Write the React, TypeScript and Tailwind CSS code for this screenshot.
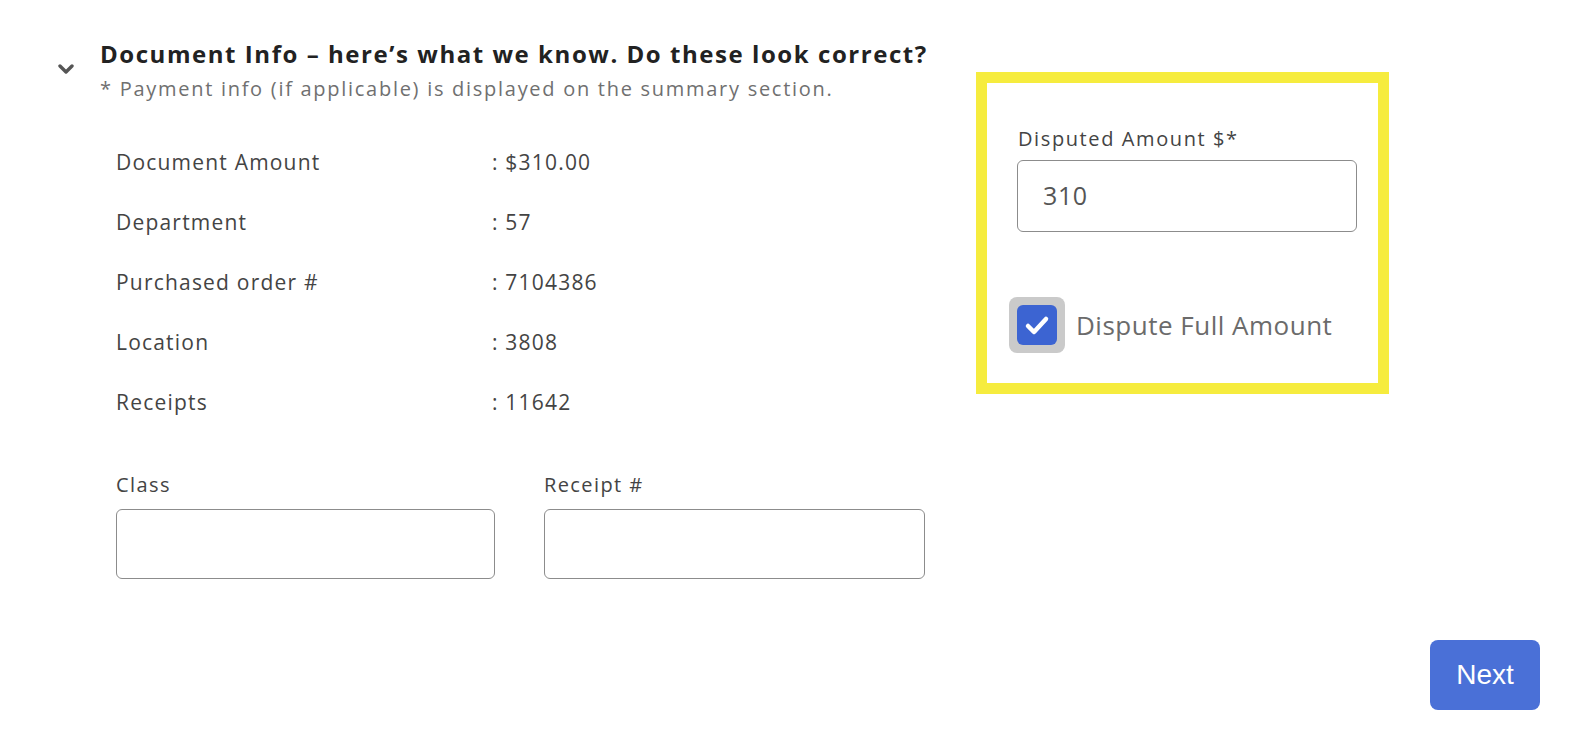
import React from 'react';

const rows = [
  { label: 'Document Amount', value: ': $310.00' },
  { label: 'Department', value: ': 57' },
  { label: 'Purchased order #', value: ': 7104386' },
  { label: 'Location', value: ': 3808' },
  { label: 'Receipts', value: ': 11642' },
];

const font = { fontFamily: '"Open Sans", "Noto Sans", sans-serif' };

export default function App() {
  return (
    <div className="w-full h-[756px] bg-white flex flex-col" style={font}>
      <div className="flex items-start">
        {/* left: document info */}
        <div className="w-[976px] flex items-start pl-[58px]">
          <svg width="16" height="10" viewBox="0 0 16 10" className="mt-[64px] shrink-0">
            <path d="M2 2 L8 8 L14 2" fill="none" stroke="#555" strokeWidth="3.4" strokeLinecap="round" strokeLinejoin="round" />
          </svg>
          <div className="ml-[26px] pt-[40px] flex flex-col">
            <h2 className="text-[24px] leading-[28px] font-bold tracking-[1.55px] text-[#222] whitespace-nowrap">
              Document Info – here’s what we know. Do these look correct?
            </h2>
            <p className="mt-[8px] text-[20px] leading-[26px] tracking-[1.72px] text-[#707070] whitespace-nowrap">
              * Payment info (if applicable) is displayed on the summary section.
            </p>

            <div className="mt-[30px] pl-[16px] flex flex-col">
              {rows.map((r) => (
                <div key={r.label} className="flex h-[60px] items-center text-[21px] leading-[60px] tracking-[1.2px] text-[#444]">
                  <span className="w-[376px]">{r.label}</span>
                  <span>{r.value}</span>
                </div>
              ))}
            </div>

            <div className="mt-[40px] pl-[16px] flex gap-[49px]">
              <div className="flex flex-col">
                <label className="text-[20px] leading-[26px] tracking-[1.4px] text-[#444]">Class</label>
                <input className="mt-[11px] w-[379px] h-[70px] rounded-[6px] border border-[#8c8c8c] bg-white outline-none" />
              </div>
              <div className="flex flex-col">
                <label className="text-[20px] leading-[26px] tracking-[1.4px] text-[#444]">Receipt #</label>
                <input className="mt-[11px] w-[381px] h-[70px] rounded-[6px] border border-[#8c8c8c] bg-white outline-none" />
              </div>
            </div>
          </div>
        </div>

        {/* right: highlighted dispute box */}
        <div className="mt-[72px] w-[413px] h-[322px] border-[11px] border-[#f6ec3e] pl-[22px] pt-[43px] flex flex-col">
          <div className="ml-[9px] text-[20px] leading-[26px] tracking-[1.6px] text-[#444]">Disputed Amount $*</div>
          <div className="ml-[8px] mt-[8px] w-[340px] h-[72px] rounded-[6px] border border-[#8c8c8c] flex items-center pl-[25px] text-[25px] tracking-[0.6px] text-[#555]">
            310
          </div>
          <div className="mt-[65px] flex items-center">
            <div className="w-[56px] h-[56px] rounded-[8px] bg-[#cacaca] flex items-center justify-center">
              <div className="w-[40px] h-[40px] rounded-[6px] bg-[#3c64d2] flex items-center justify-center">
                <svg width="40" height="40" viewBox="0 0 40 40">
                  <path d="M11 21 L17 27 L29 14" fill="none" stroke="#fff" strokeWidth="4.5" strokeLinecap="round" strokeLinejoin="round" />
                </svg>
              </div>
            </div>
            <span className="ml-[11px] text-[26px] tracking-[0.5px] text-[#6b6b6b]">Dispute Full Amount</span>
          </div>
        </div>
      </div>

      <div className="mt-[61px] flex justify-end pr-[40px]">
        <button
          className="w-[110px] h-[70px] rounded-[8px] bg-[#4a70d7] text-white text-[28px]"
          style={{ fontFamily: '"Liberation Sans", Arial, sans-serif' }}
        >
          Next
        </button>
      </div>
    </div>
  );
}
